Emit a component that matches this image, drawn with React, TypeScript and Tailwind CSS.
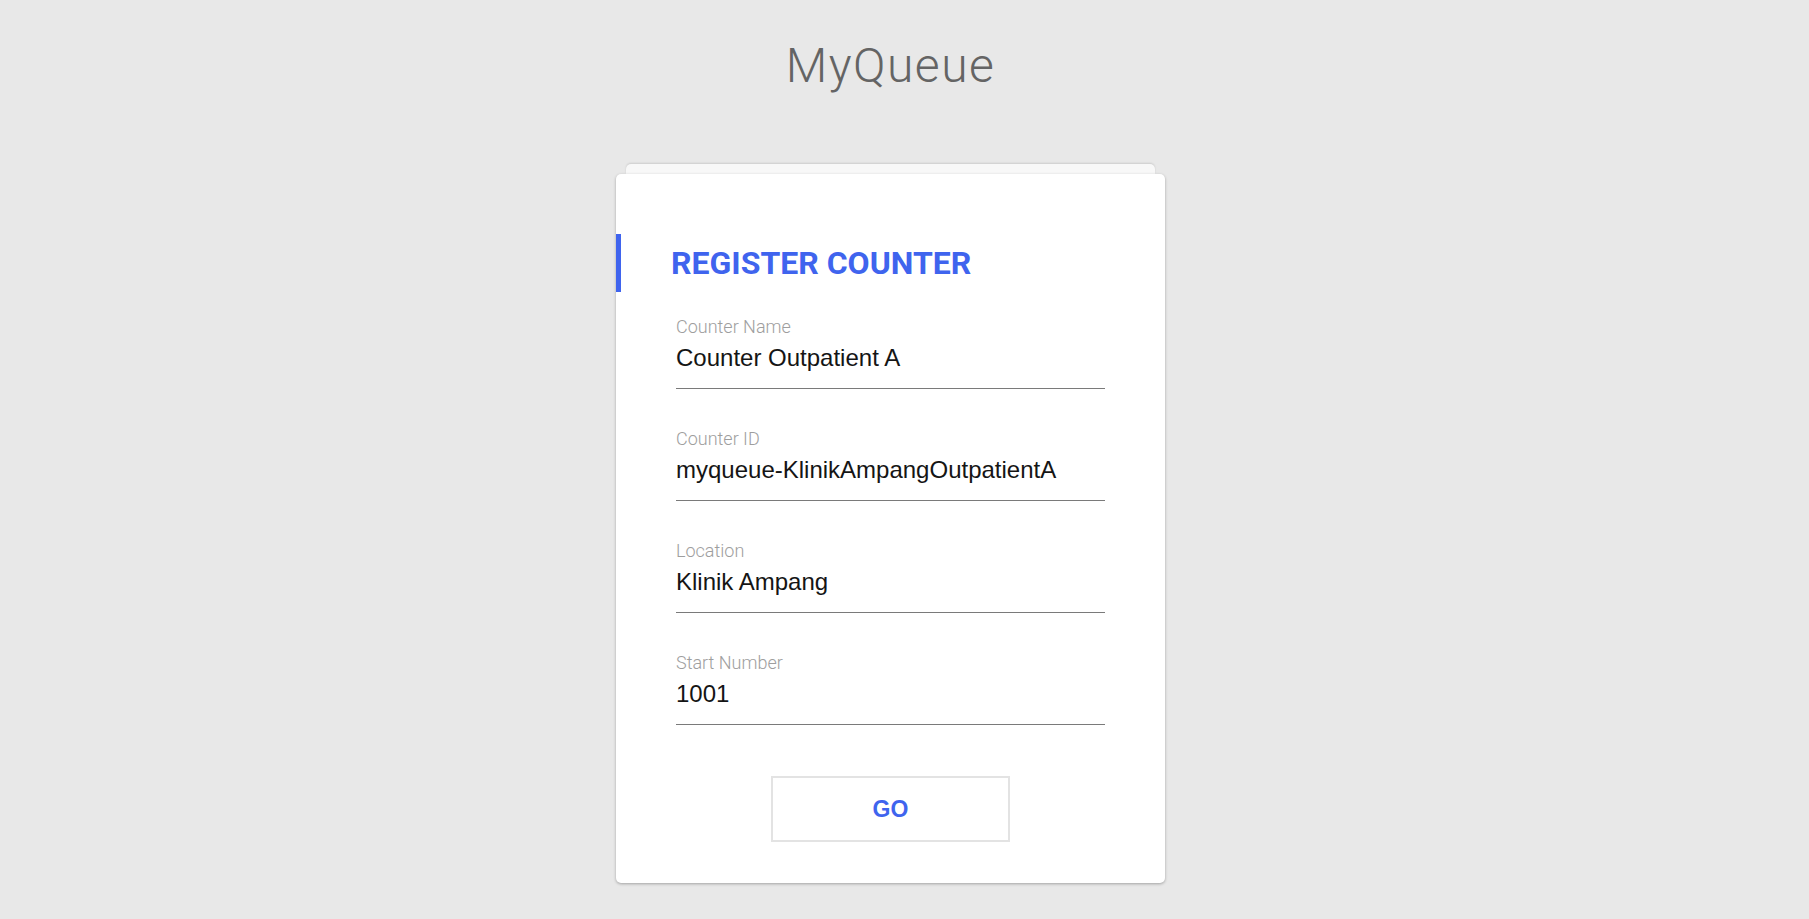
const fields = [
  { label: 'Counter Name', value: 'Counter Outpatient A' },
  { label: 'Counter ID', value: 'myqueue-KlinikAmpangOutpatientA' },
  { label: 'Location', value: 'Klinik Ampang' },
  { label: 'Start Number', value: '1001' },
];

// Поле формы: подпись сверху, значение, линия снизу
function Field({ label, value }: { label: string; value: string }) {
  return (
    <div className="border-b border-[#7a7a7a] pb-4">
      <div className="font-['Roboto'] text-[18px] leading-[18px] font-light text-[#9e9e9e]">{label}</div>
      <div className="mt-[8px] font-['Liberation_Sans'] text-[24px] leading-7 text-[#151515]">{value}</div>
    </div>
  );
}

export default function App() {
  return (
    <div className="min-h-[919px] bg-[#e8e8e8] pr-[28px] pb-9 font-['Roboto',sans-serif]">
      <h1 className="pt-[38px] text-center font-['Roboto'] text-[48px] leading-[56px] font-light tracking-[1.5px] text-[#646464]">
        MyQueue
      </h1>

      <div className="mt-[70px] flex flex-col items-center">
        <div className="h-[10px] w-[529px] rounded-t-[5px] bg-[#f8f8f8] shadow-[0_-1px_2px_rgba(0,0,0,0.12)]" />
        <div className="w-[549px] rounded-[5px] bg-white pt-[60px] pb-[41px] shadow-[0_1px_3px_rgba(0,0,0,0.3)]">
          <div className="border-l-[5px] border-[#3f64ee] py-[9px] pl-[50px]">
            <h2 className="font-['Roboto'] text-[32px] leading-10 font-bold text-[#3f64ee]">REGISTER COUNTER</h2>
          </div>

          <div className="mt-[26px] flex flex-col gap-[41px] px-[60px]">
            {fields.map((f) => (
              <Field key={f.label} label={f.label} value={f.value} />
            ))}
          </div>

          <div className="mt-[51px] flex justify-center">
            <button className="h-[66px] w-[239px] border-2 border-[#e3e3e3] bg-white font-['Liberation_Sans'] text-[23px] font-bold text-[#3f64ee]">
              GO
            </button>
          </div>
        </div>
      </div>
    </div>
  );
}
